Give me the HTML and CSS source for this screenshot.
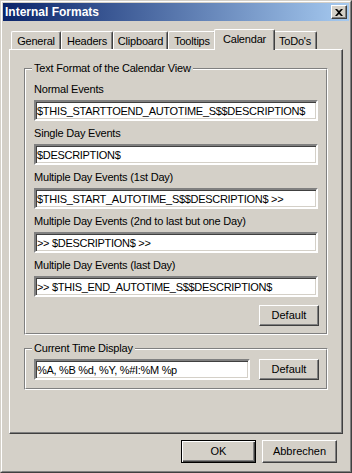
FILE: index.html
```html
<!DOCTYPE html>
<html lang="en">
<head>
  <meta charset="UTF-8">
  <title>Internal Formats</title>
  <link rel="stylesheet" href="styles.css">
</head>
<body>
  <div class="window">
    <div class="frame">
      <div class="titlebar">
        <span class="title">Internal Formats</span>
        <span class="close">
          <svg width="8" height="7" viewBox="0 0 8 7"><path d="M0 0h2l2 2 2-2h2L5 3.5 8 7H6L4 5 2 7H0l3-3.5z" fill="#000"/></svg>
        </span>
      </div>

      <div class="content">
        <div class="tabs">
          <div class="tab tab-general">General</div>
          <div class="tab tab-headers">Headers</div>
          <div class="tab tab-clipboard">Clipboard</div>
          <div class="tab tab-tooltips">Tooltips</div>
          <div class="tab tab-calendar active">Calendar</div>
          <div class="tab tab-todo">ToDo's</div>
        </div>

        <div class="panel">
          <div class="group">
            <div class="group-in">
              <div class="group-title">Text Format of the Calendar View</div>

              <label class="field-label">Normal Events</label>
              <input class="field" type="text" value="$THIS_STARTTOEND_AUTOTIME_S$$DESCRIPTION$">

              <label class="field-label">Single Day Events</label>
              <input class="field" type="text" value="$DESCRIPTION$">

              <label class="field-label">Multiple Day Events (1st Day)</label>
              <input class="field" type="text" value="$THIS_START_AUTOTIME_S$$DESCRIPTION$ &gt;&gt;">

              <label class="field-label">Multiple Day Events (2nd to last but one Day)</label>
              <input class="field" type="text" value="&gt;&gt; $DESCRIPTION$ &gt;&gt;">

              <label class="field-label">Multiple Day Events (last Day)</label>
              <input class="field" type="text" value="&gt;&gt; $THIS_END_AUTOTIME_S$$DESCRIPTION$">

              <button class="btn btn-small btn-right">Default</button>
            </div>
          </div>

          <div class="group group-time">
            <div class="group-in">
              <div class="group-title title-time">Current Time Display</div>
              <div class="time-row">
                <input class="field field-time" type="text" value="%A, %B %d, %Y, %#I:%M %p">
                <button class="btn btn-small">Default</button>
              </div>
            </div>
          </div>
        </div>

        <div class="actions">
          <button class="btn btn-dialog btn-default">OK</button>
          <button class="btn btn-dialog">Abbrechen</button>
        </div>
      </div>
    </div>
  </div>
</body>
</html>
```

FILE: styles.css
```css
* {
  box-sizing: border-box;
}
body {
  margin: 0;
  background: #d4d0c8;
  font-family: "Liberation Sans", Arial, sans-serif;
  font-size: 11px;
  letter-spacing: -0.2px;
  color: #000;
}
.window {
  width: 352px;
  height: 473px;
  border: 1px solid;
  border-color: #d4d0c8 #404040 #404040 #d4d0c8;
}
.frame {
  height: 100%;
  border: 1px solid;
  border-color: #fff #808080 #808080 #fff;
  padding: 1px;
}

/* title bar */
.titlebar {
  height: 18px;
  display: flex;
  align-items: center;
  justify-content: space-between;
  padding: 0 2px 0 2px;
  background: linear-gradient(to right, #0a246a, #a6caf0);
}
.title {
  color: #fff;
  font-weight: bold;
  font-size: 12px;
  letter-spacing: 0;
  line-height: 14px;
}
.close {
  width: 16px;
  height: 14px;
  display: flex;
  align-items: center;
  justify-content: center;
  background: #d4d0c8;
  border: 1px solid;
  border-color: #fff #404040 #404040 #fff;
  box-shadow: inset -1px -1px #808080;
  padding-top: 1px;
}

/* main area */
.content {
  padding: 8px 6px 0 6px;
}
.tabs {
  display: flex;
  align-items: flex-end;
  height: 20px;
  padding-left: 2px;
}
.tab {
  height: 18px;
  padding-top: 3px;
  line-height: 13px;
  text-align: center;
  border: 1px solid;
  border-bottom: none;
  border-color: #fff #404040 #404040 #fff;
  border-radius: 2px 2px 0 0;
  box-shadow: inset -1px 0 #808080;
  background: #d4d0c8;
}
.tab-general { width: 50px; }
.tab-headers { width: 52px; }
.tab-clipboard { width: 55px; }
.tab-tooltips { width: 48px; }
.tab-calendar { width: 57px; }
.tab-todo { width: 44px; }
.tab.active {
  position: relative;
  z-index: 1;
  width: 61px;
  height: 21px;
  margin: 0 -2px -1px -2px;
  padding-top: 3px;
}

.panel {
  width: 334px;
  height: 385px;
  border: 1px solid;
  border-color: #fff #404040 #404040 #fff;
  box-shadow: inset -1px -1px #808080;
  padding: 18px 0 0 14px;
}

/* etched group box */
.group {
  width: 304px;
  border: 1px solid;
  border-color: #808080 #fff #fff #808080;
}
.group-in {
  display: flex;
  flex-direction: column;
  border: 1px solid;
  border-color: #fff #808080 #808080 #fff;
  padding: 0 7px 7px 8px;
}
.group-title {
  align-self: flex-start;
  margin: -8px 0 8px -2px;
  padding: 0 2px;
  line-height: 13px;
  background: #d4d0c8;
}
.group-time {
  margin-top: 13px;
}
.group-time .group-in {
  padding-bottom: 8px;
}
.title-time {
  margin-bottom: 4px;
}

.field-label {
  line-height: 12px;
  margin-bottom: 5px;
}
.field {
  display: block;
  width: 284px;
  height: 21px;
  margin: 0 0 6px 0;
  padding: 0 1px;
  font: inherit;
  letter-spacing: -0.3px;
  color: #000;
  background: #fff;
  border: 2px solid;
  border-color: #808080 #fff #fff #808080;
  box-shadow: inset 1px 1px #404040, inset -1px -1px #d4d0c8;
  outline: none;
}
.time-row {
  display: flex;
  gap: 9px;
}
.field-time {
  width: 216px;
  margin: 0;
}

/* buttons */
.btn {
  font: inherit;
  letter-spacing: 0;
  color: #000;
  background: #d4d0c8;
  border: 1px solid;
  border-color: #fff #404040 #404040 #fff;
  box-shadow: inset -1px -1px #808080;
  padding: 0;
  line-height: 13px;
}
.btn-small {
  width: 60px;
  height: 21px;
}
.btn-right {
  align-self: flex-end;
  margin-top: 2px;
}
.actions {
  display: flex;
  justify-content: flex-end;
  gap: 6px;
  padding: 6px 6px 0 0;
}
.btn-dialog {
  width: 75px;
  height: 23px;
}
.btn-default {
  border-color: #000;
  box-shadow: inset 1px 1px #fff, inset -1px -1px #404040, inset -2px -2px #808080;
}
```
